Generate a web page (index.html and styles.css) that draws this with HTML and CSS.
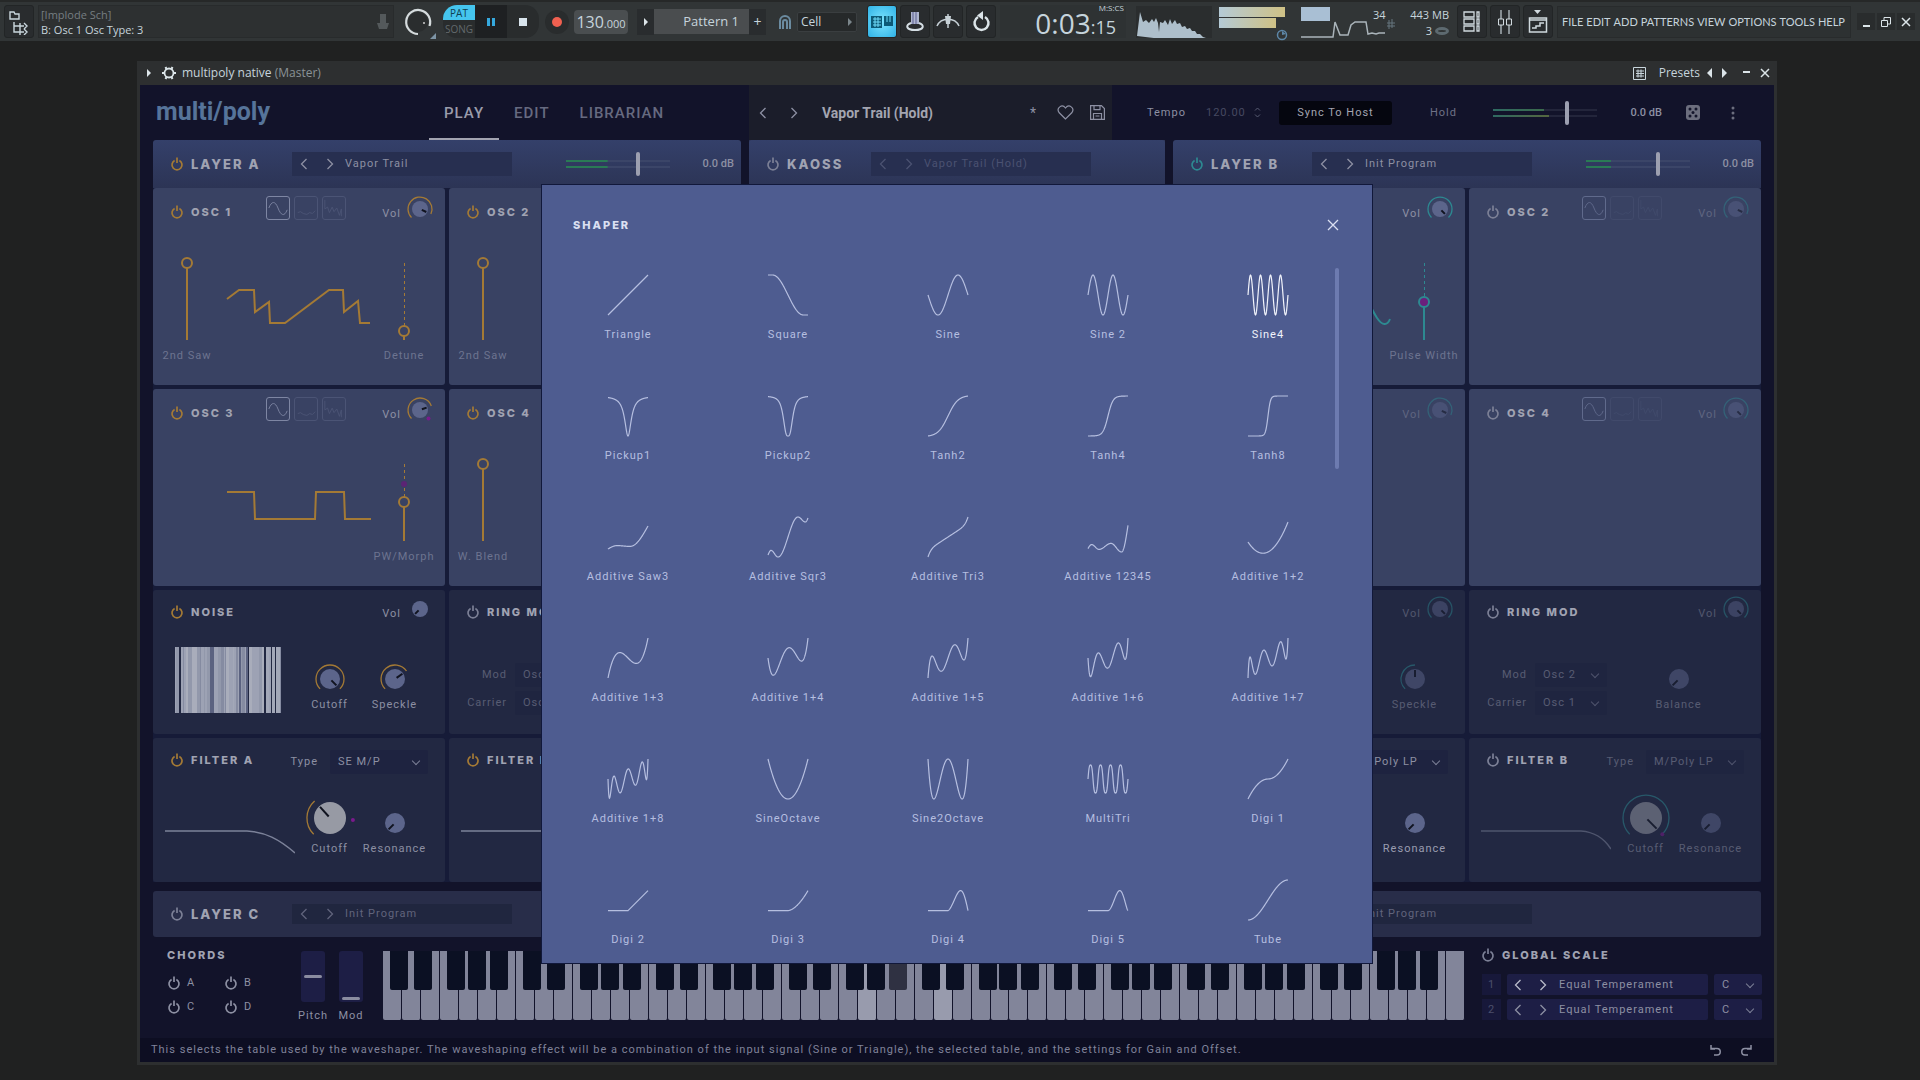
FILE: index.html
```html
<!DOCTYPE html>
<html lang="en">
<head>
    <meta charset="UTF-8">
    <meta name="viewport" content="width=device-width, initial-scale=1.0">
    <title>multipoly native (Master)</title>
    <link rel="stylesheet" href="styles.css">
</head>
<body>
    <svg class="sprite" aria-hidden="true">
        <symbol id="power" viewBox="0 0 14 14">
            <path d="M4.6 3.4a5 5 0 1 0 4.8 0M7 .5v5.5" fill="none" stroke="currentColor" stroke-width="1.7"/>
        </symbol>
        <symbol id="prev" viewBox="0 0 8 12"><path d="M6.5 1L1.5 6l5 5" fill="none" stroke="currentColor" stroke-width="1.3"/></symbol>
        <symbol id="next" viewBox="0 0 8 12"><path d="M1.5 1l5 5-5 5" fill="none" stroke="currentColor" stroke-width="1.3"/></symbol>
        <symbol id="mode-va" viewBox="0 0 24 24"><path d="M2 12C5 4 9 4 12 12s7 10 10 2" fill="none" stroke="currentColor"/></symbol>
        <symbol id="mode-wave" viewBox="0 0 24 24"><path d="M3 17l3-1 3 2 4 1 3-2 3 1 3-3" fill="none" stroke="currentColor"/></symbol>
        <symbol id="mode-digi" viewBox="0 0 24 24"><path d="M2 3v10l3-2 2 6 3-6 2 5 3-4 3 8 2-7v8" fill="none" stroke="currentColor"/></symbol>
    </svg>

    <!-- Host toolbar -->
    <header class="toolbar">
        <button class="tool tool-browser" aria-label="Browser">
            <svg width="22" height="26" viewBox="0 0 22 26"><path d="M2 3h4l1 2h4v5H2zM6 13v10h10M6 17h10M12 14v6M16 14l3 3-3 3M12 20v6M16 20l3 3-3 3" fill="none" stroke="#c9d6dd" stroke-width="1.4"/></svg>
        </button>
        <div class="hint">
            <div class="hint-text">
                <span class="hint-dim">[Implode Sch]</span>
                <span>B: Osc 1 Osc Type: 3</span>
            </div>
            <svg width="14" height="18" viewBox="0 0 14 18"><path d="M4 1h6v9h3l-2 6H3l-2-6h3z" fill="#54595b"/></svg>
        </div>
        <svg class="master" width="34" height="34" viewBox="0 0 34 34">
            <circle cx="16" cy="17" r="10" fill="#2a2d2e"/>
            <path d="M16 29a12 12 0 1 1 11.5-8" fill="none" stroke="#d5dbdd" stroke-width="2.2"/>
            <circle cx="22" cy="18" r="1" fill="#ccc"/><path d="M34 28v6h-6z" fill="#7d94a5"/>
        </svg>
        <div class="transport">
            <div class="pat-song">
                <button class="pat">PAT</button>
                <button class="song">SONG</button>
            </div>
            <button class="play-btn" aria-label="Pause"><svg width="8" height="8"><path d="M0 0h3v8H0zM5 0h3v8H5z" fill="#35a8dd"/></svg></button>
            <button class="stop-btn" aria-label="Stop"><svg width="8" height="8"><path d="M0 0h8v8H0z" fill="#d8e4ec"/></svg></button>
        </div>
        <button class="record" aria-label="Record"><svg width="26" height="26"><circle cx="13" cy="13" r="12" fill="#292c2d"/><circle cx="13" cy="13" r="5" fill="#f06050"/></svg></button>
        <div class="bpm">130<small>.000</small></div>
        <div class="pattern">
            <button class="tool-sm" aria-label="Pattern menu"><svg width="4" height="8"><path d="M0 0l4 4-4 4z" fill="#dde6ea"/></svg></button>
            <span class="pattern-name">Pattern 1</span>
            <button class="tool-sm" aria-label="Add pattern">+</button>
        </div>
        <div class="snap">
            <svg width="14" height="16" viewBox="0 0 14 16"><path d="M2 15V7a5 5 0 0 1 10 0v8M5 15V8a2 2 0 0 1 4 0v7" fill="none" stroke="#6b8ba0" stroke-width="2"/></svg>
            <button class="snap-box">Cell<svg width="4" height="8"><path d="M0 0l4 4-4 4z" fill="#7b868b"/></svg></button>
        </div>
        <div class="tool-group">
            <button class="tool tool-on" aria-label="Typing keyboard">
                <svg width="22" height="14" viewBox="0 0 22 14"><path d="M0 1h11v12H0zM13 1h9v10h-9z" fill="#0c5a77"/><path d="M2 4h8M2 7h8M2 10h8M4 2v10M7 2v10M16 1v6M19 1v6" stroke="#6fdcfb"/></svg>
            </button>
            <button class="tool" aria-label="Count in">
                <svg width="20" height="22" viewBox="0 0 20 22"><path d="M6 1h8v12H6z" fill="#aeb6cf"/><path d="M8 1v12M11 1v12" stroke="#5d5f90"/><path d="M6 12c-6 2-5 7 4 7s10-5 4-7" fill="none" stroke="#d5dee4" stroke-width="2"/></svg>
            </button>
            <button class="tool" aria-label="Step edit">
                <svg width="24" height="20" viewBox="0 0 24 20"><path d="M1 14C5 5 19 5 23 14M12 2v14" fill="none" stroke="#c6d0d6" stroke-width="1.5"/><path d="M9 4h6l-1 8h-4z" fill="#c6d0d6"/></svg>
            </button>
            <button class="tool" aria-label="Loop record">
                <svg width="20" height="22" viewBox="0 0 20 22"><path d="M14 6a7 7 0 1 1-7 0" fill="none" stroke="#dbe4e8" stroke-width="2.5"/><path d="M12 0v9L6 4.5z" fill="#dbe4e8"/></svg>
            </button>
        </div>
        <div class="clock">
            <span>0:03<small>:15</small></span>
            <sup>M:S:CS</sup>
        </div>
        <svg class="spectrum" width="76" height="32" viewBox="0 0 76 32"><path d="M1 30L4 6l3 10 3-2 3 3 3-4 2 3 2-4 2 5 1 9 1-10 3 1 2-3 3 5 2-6 2 5 3-4 2 4 3-1 2 4 3-1 2 3 3-1 2 3 3 0 2 3 3 0 3 3 3 1 2 2 2 1 2 3v1z" fill="#aebfcb"/></svg>
        <div class="levels">
            <i></i><i class="short"></i>
            <svg width="12" height="12" viewBox="0 0 12 12"><circle cx="6" cy="6" r="4.5" fill="none" stroke="#5d87a8" stroke-width="1.5"/><path d="M6 6V2l4 3z" fill="#5d87a8"/></svg>
        </div>
        <div class="perf">
            <svg width="96" height="36" viewBox="0 0 96 36"><path d="M0 3h29v14H0z" fill="#a9bfd4"/><path d="M0 33h32l2-15 5 13h8l3-10 4-3h11l2 12 4-1 4 1 3-1h6" fill="none" stroke="#aab4ba" stroke-width="1.5"/><path d="M88 16v9M91 15v9M86 19h8M86 22h8" stroke="#66767f"/></svg>
            <span class="perf-cpu">34</span>
            <div class="perf-mem"><span>443 MB</span><span>3 <i></i></span></div>
        </div>
        <div class="tool-group">
            <button class="tool" aria-label="Playlist"><svg width="18" height="22" viewBox="0 0 18 22"><path d="M1 1h10v5H1zM1 8h10v5H1zM1 15h10v5H1zM14 1h2v5h-2zM14 8h2v5h-2zM14 15h2v5h-2z" fill="none" stroke="#d0d9de" stroke-width="1.3"/></svg></button>
            <button class="tool" aria-label="Mixer"><svg width="16" height="24" viewBox="0 0 16 24"><path d="M4 0v24M12 0v24" stroke="#b8c2c8" stroke-width="1.3"/><path d="M1.5 9h5v6h-5zM9.5 9h5v6h-5z" fill="#2c2f31" stroke="#d0d9de"/></svg></button>
            <button class="tool" aria-label="Channel rack"><svg width="20" height="24" viewBox="0 0 20 24"><path d="M6 0h7l-3.5 4z" fill="#d0d9de"/><path d="M1.5 8h17v14h-17zM1.5 10h17M4 18h4v-2h4v-3h4" fill="none" stroke="#d0d9de" stroke-width="1.5"/></svg></button>
        </div>
        <nav class="menu">
            <button>FILE</button><button>EDIT</button><button>ADD</button><button>PATTERNS</button><button>VIEW</button><button>OPTIONS</button><button>TOOLS</button><button>HELP</button>
        </nav>
        <div class="win-btns">
            <button aria-label="Minimize"><svg width="10" height="10"><path d="M2 9h7" stroke="#dbe4e8" stroke-width="2"/></svg></button>
            <button aria-label="Restore"><svg width="10" height="10"><path d="M.5 3.5h6v6h-6zM3 3V.5h6.5V7H7" fill="none" stroke="#dbe4e8"/></svg></button>
            <button aria-label="Close"><svg width="10" height="10"><path d="M1 1l8 8M9 1L1 9" stroke="#dbe4e8" stroke-width="1.5"/></svg></button>
        </div>
    </header>

    <!-- Plugin window -->
    <main class="window">
        <div class="titlebar">
            <svg width="4" height="8"><path d="M0 0l4 4-4 4z" fill="#dde6ea"/></svg>
            <svg class="gear" width="14" height="14" viewBox="0 0 14 14"><circle cx="7" cy="7" r="4.5" fill="none" stroke="#dde6ea" stroke-width="1.8"/><path d="M3.5 1l1 2M10.5 1l-1 2M3.5 13l1-2M10.5 13l-1-2M0 7h2M12 7h2" stroke="#dde6ea" stroke-width="2"/></svg>
            <span>multipoly native <em>(Master)</em></span>
            <div class="titlebar-right">
                <svg width="13" height="13"><path d="M.5.5h12v12H.5z" fill="none" stroke="#c9d6dd"/><path d="M3 4h8M3 6.5h8M3 9h8M5 2.5v8M8 2.5v8" stroke="#c9d6dd"/></svg>
                <button class="presets">Presets</button>
                <button aria-label="Previous preset"><svg width="5" height="10"><path d="M5 0L0 5l5 5z" fill="#dbe4e8"/></svg></button>
                <button aria-label="Next preset"><svg width="5" height="10"><path d="M0 0l5 5-5 5z" fill="#dbe4e8"/></svg></button>
                <button class="tb-min" aria-label="Minimize"><svg width="8" height="10"><path d="M0 4h7" stroke="#dbe4e8" stroke-width="2"/></svg></button>
                <button class="tb-close" aria-label="Close"><svg width="10" height="10"><path d="M1 1l8 8M9 1L1 9" stroke="#dbe4e8" stroke-width="1.5"/></svg></button>
            </div>
        </div>

        <div class="plugin">
            <div class="topbar">
                <div class="topbar-left">
                    <div class="logo">multi/poly</div>
                    <nav class="tabs">
                        <button class="tab active">PLAY</button>
                        <button class="tab">EDIT</button>
                        <button class="tab">LIBRARIAN</button>
                    </nav>
                </div>
                <div class="program">
                    <button aria-label="Previous"><svg width="8" height="12"><use href="#prev"/></svg></button>
                    <button aria-label="Next"><svg width="8" height="12"><use href="#next"/></svg></button>
                    <span class="program-name">Vapor Trail (Hold)</span>
                    <span class="program-star">*</span>
                    <button aria-label="Favorite"><svg width="17" height="15" viewBox="0 0 17 15"><path d="M8.5 14L2 7.5C-1 3 5-1.5 8.5 3 12-1.5 18 3 15 7.5z" fill="none" stroke="currentColor" stroke-width="1.2"/></svg></button>
                    <button aria-label="Save"><svg width="15" height="15" viewBox="0 0 15 15"><path d="M.6.6h10.8l3 3v10.8H.6zM4 .6v4h6v-4M3.5 14V8.5h8V14M5.5 11h4" fill="none" stroke="currentColor" stroke-width="1.2"/></svg></button>
                </div>
                <div class="topbar-right">
                    <label for="tempo">Tempo</label>
                    <input id="tempo" class="tempo" type="text" value="120.00">
                    <svg class="updown" width="7" height="11"><path d="M1 3.5L3.5 1 6 3.5M1 7.5L3.5 10 6 7.5" fill="none" stroke="currentColor"/></svg>
                    <button class="sync">Sync To Host</button>
                    <span class="hold">Hold</span>
                    <input class="meter meter-main" type="range" value="72" aria-label="Master volume">
                    <output>0.0 dB</output>
                    <button class="dice" aria-label="Randomize"><svg width="14" height="15" viewBox="0 0 14 15"><rect width="14" height="15" rx="3" fill="#6c6e7e"/><g fill="#14152b"><circle cx="4" cy="4" r="1.5"/><circle cx="10" cy="4" r="1.5"/><circle cx="7" cy="7.5" r="1.5"/><circle cx="4" cy="11" r="1.5"/><circle cx="10" cy="11" r="1.5"/></g></svg></button>
                    <button aria-label="More"><svg width="4" height="14"><g fill="#6c6e7e"><circle cx="2" cy="2" r="1.5"/><circle cx="2" cy="7" r="1.5"/><circle cx="2" cy="12" r="1.5"/></g></svg></button>
                </div>
            </div>

            <div class="layers">
                <section class="layer layer-a">
                    <div class="layer-head">
                        <button class="power on" aria-label="Layer A power"><svg><use href="#power"/></svg></button>
                        <h2>LAYER A</h2>
                        <div class="preset">
                            <button aria-label="Previous"><svg width="8" height="12"><use href="#prev"/></svg></button>
                            <button aria-label="Next"><svg width="8" height="12"><use href="#next"/></svg></button>
                            <span>Vapor Trail</span>
                        </div>
                        <input class="meter meter-a" type="range" value="70" aria-label="Layer A volume">
                        <output>0.0 dB</output>
                    </div>
                    <div class="panels">
                        <article class="panel osc">
                            <div class="panel-head">
                                <button class="power on" aria-label="Osc 1 power"><svg><use href="#power"/></svg></button>
                                <h3>OSC 1</h3>
                                <div class="modes">
                                    <button class="active" aria-label="Analog"><svg><use href="#mode-va"/></svg></button><button aria-label="Wave"><svg><use href="#mode-wave"/></svg></button><button aria-label="Digital"><svg><use href="#mode-digi"/></svg></button>
                                </div>
                                <div class="vol"><span>Vol</span><i class="knob" data-angle="115"></i></div>
                            </div>
                            <div class="osc-body">
                                <div class="fader-col">
                                    <input class="fader" id="a1-saw" type="range" value="100" style="--fill:100%">
                                    <label for="a1-saw">2nd Saw</label>
                                </div>
                                <svg class="wave" viewBox="0 0 143 36"><path d="M0 10L12 1h15l1 22 14-10 1 21h15L102 1h14l1 22 14-11 2 22h10"/></svg>
                                <div class="fader-col right">
                                    <input class="fader" id="a1-det" type="range" value="12" style="--fill:13%">
                                    <label for="a1-det">Detune</label>
                                </div>
                            </div>
                        </article>
                        <article class="panel osc">
                            <div class="panel-head">
                                <button class="power on" aria-label="Osc 2 power"><svg><use href="#power"/></svg></button>
                                <h3>OSC 2</h3>
                            </div>
                            <div class="osc-body">
                                <div class="fader-col">
                                    <input class="fader" id="a2-saw" type="range" value="100" style="--fill:100%">
                                    <label for="a2-saw">2nd Saw</label>
                                </div>
                                <svg class="wave" viewBox="0 0 143 36"><path d="M0 1h6l1 22h20l20-22h20v33h40V1h36"/></svg>
                            </div>
                        </article>
                        <article class="panel osc">
                            <div class="panel-head">
                                <button class="power on" aria-label="Osc 3 power"><svg><use href="#power"/></svg></button>
                                <h3>OSC 3</h3>
                                <div class="modes">
                                    <button class="active" aria-label="Analog"><svg><use href="#mode-va"/></svg></button><button aria-label="Wave"><svg><use href="#mode-wave"/></svg></button><button aria-label="Digital"><svg><use href="#mode-digi"/></svg></button>
                                </div>
                                <div class="vol"><span>Vol</span><i class="knob" data-angle="70" data-mod="135"></i></div>
                            </div>
                            <div class="osc-body">
                                <div class="fader-col"></div>
                                <svg class="wave" viewBox="0 0 143 36"><path d="M0 2h27l1 27h60l1-27h28l1 27h26"/></svg>
                                <div class="fader-col right">
                                    <input class="fader modded" id="a3-pw" type="range" value="51" style="--fill:51%">
                                    <label for="a3-pw">PW/Morph</label>
                                </div>
                            </div>
                        </article>
                        <article class="panel osc">
                            <div class="panel-head">
                                <button class="power on" aria-label="Osc 4 power"><svg><use href="#power"/></svg></button>
                                <h3>OSC 4</h3>
                            </div>
                            <div class="osc-body">
                                <div class="fader-col">
                                    <input class="fader" id="a4-blend" type="range" value="100" style="--fill:100%">
                                    <label for="a4-blend">W. Blend</label>
                                </div>
                                <svg class="wave" viewBox="0 0 143 36"><path d="M0 28h60V2h40v26h43"/></svg>
                            </div>
                        </article>
                        <article class="panel low">
                            <div class="panel-head">
                                <button class="power on" aria-label="Noise power"><svg><use href="#power"/></svg></button>
                                <h3>NOISE</h3>
                                <div class="vol"><span>Vol</span><i class="knob" data-angle="-135"></i></div>
                            </div>
                            <div class="low-body">
                                <svg class="noise" id="noise" viewBox="0 0 110 66"></svg>
                                <div class="knobs">
                                    <div class="knob-col"><i class="knob mid" data-angle="135"></i><span>Cutoff</span></div>
                                    <div class="knob-col"><i class="knob mid" data-angle="55"></i><span>Speckle</span></div>
                                </div>
                            </div>
                        </article>
                        <article class="panel low">
                            <div class="panel-head">
                                <button class="power" aria-label="Ring mod power"><svg><use href="#power"/></svg></button>
                                <h3>RING MOD</h3>
                            </div>
                            <div class="low-body faint">
                                <div class="ring-form">
                                    <label for="a-mod">Mod</label><div class="select"><select id="a-mod"><option>Osc 2</option></select></div>
                                    <label for="a-car">Carrier</label><div class="select"><select id="a-car"><option>Osc 1</option></select></div>
                                </div>
                            </div>
                        </article>
                        <article class="panel low filter">
                            <div class="panel-head">
                                <button class="power on" aria-label="Filter A power"><svg><use href="#power"/></svg></button>
                                <h3>FILTER A</h3>
                                <div class="type"><label for="a-ft">Type</label><div class="select"><select id="a-ft"><option>SE M/P</option></select></div></div>
                            </div>
                            <div class="low-body">
                                <svg class="curve" viewBox="0 0 130 26"><path d="M0 2h82c18 1 32 8 48 22"/></svg>
                                <div class="knobs">
                                    <div class="knob-col"><i class="knob big" data-angle="-42" data-mod="95"></i><span>Cutoff</span></div>
                                    <div class="knob-col"><i class="knob mid" data-angle="-135"></i><span>Resonance</span></div>
                                </div>
                            </div>
                        </article>
                        <article class="panel low filter">
                            <div class="panel-head">
                                <button class="power on" aria-label="Filter B power"><svg><use href="#power"/></svg></button>
                                <h3>FILTER B</h3>
                            </div>
                            <div class="low-body">
                                <svg class="curve" viewBox="0 0 130 26"><path d="M0 2h82c18 1 32 8 48 22"/></svg>
                            </div>
                        </article>
                    </div>
                    <div class="layer-head flat">
                        <button class="power" aria-label="Layer C power"><svg><use href="#power"/></svg></button>
                        <h2>LAYER C</h2>
                        <div class="preset dim">
                            <button aria-label="Previous"><svg width="8" height="12"><use href="#prev"/></svg></button>
                            <button aria-label="Next"><svg width="8" height="12"><use href="#next"/></svg></button>
                            <span>Init Program</span>
                        </div>
                    </div>
                </section>

                <section class="layer kaoss">
                    <div class="layer-head">
                        <button class="power" aria-label="Kaoss power"><svg><use href="#power"/></svg></button>
                        <h2>KAOSS</h2>
                        <div class="preset faint">
                            <button aria-label="Previous"><svg width="8" height="12"><use href="#prev"/></svg></button>
                            <button aria-label="Next"><svg width="8" height="12"><use href="#next"/></svg></button>
                            <span>Vapor Trail (Hold)</span>
                        </div>
                    </div>
                </section>

                <section class="layer layer-b">
                    <div class="layer-head">
                        <button class="power on" aria-label="Layer B power"><svg><use href="#power"/></svg></button>
                        <h2>LAYER B</h2>
                        <div class="preset">
                            <button aria-label="Previous"><svg width="8" height="12"><use href="#prev"/></svg></button>
                            <button aria-label="Next"><svg width="8" height="12"><use href="#next"/></svg></button>
                            <span>Init Program</span>
                        </div>
                        <input class="meter meter-b" type="range" value="70" aria-label="Layer B volume">
                        <output>0.0 dB</output>
                    </div>
                    <div class="panels">
                        <article class="panel osc">
                            <div class="panel-head">
                                <div class="vol"><span>Vol</span><i class="knob" data-angle="135"></i></div>
                            </div>
                            <div class="osc-body">
                                <div class="fader-col"></div>
                                <svg class="wave" viewBox="0 0 143 36"><path d="M0 20c20-40 40 30 60 10s35-50 60-20c6 12 12 26 18 25q3 0 5-5"/></svg>
                                <div class="fader-col right">
                                    <input class="fader dotted" id="b1-pw" type="range" value="50" style="--fill:50%">
                                    <label for="b1-pw">Pulse Width</label>
                                </div>
                            </div>
                        </article>
                        <article class="panel osc off">
                            <div class="panel-head">
                                <button class="power" aria-label="Osc 2 power"><svg><use href="#power"/></svg></button>
                                <h3>OSC 2</h3>
                                <div class="modes">
                                    <button class="active" aria-label="Analog"><svg><use href="#mode-va"/></svg></button><button aria-label="Wave"><svg><use href="#mode-wave"/></svg></button><button aria-label="Digital"><svg><use href="#mode-digi"/></svg></button>
                                </div>
                                <div class="vol"><span>Vol</span><i class="knob" data-angle="115"></i></div>
                            </div>
                        </article>
                        <article class="panel osc off">
                            <div class="panel-head">
                                <div class="vol"><span>Vol</span><i class="knob" data-angle="115"></i></div>
                            </div>
                        </article>
                        <article class="panel osc off">
                            <div class="panel-head">
                                <button class="power" aria-label="Osc 4 power"><svg><use href="#power"/></svg></button>
                                <h3>OSC 4</h3>
                                <div class="modes">
                                    <button class="active" aria-label="Analog"><svg><use href="#mode-va"/></svg></button><button aria-label="Wave"><svg><use href="#mode-wave"/></svg></button><button aria-label="Digital"><svg><use href="#mode-digi"/></svg></button>
                                </div>
                                <div class="vol"><span>Vol</span><i class="knob" data-angle="135"></i></div>
                            </div>
                        </article>
                        <article class="panel low off">
                            <div class="panel-head">
                                <div class="vol"><span>Vol</span><i class="knob" data-angle="135"></i></div>
                            </div>
                            <div class="low-body faint">
                                <div class="knobs">
                                    <div class="knob-col"><i class="knob mid" data-angle="0"></i><span>Speckle</span></div>
                                </div>
                            </div>
                        </article>
                        <article class="panel low off">
                            <div class="panel-head">
                                <button class="power" aria-label="Ring mod power"><svg><use href="#power"/></svg></button>
                                <h3>RING MOD</h3>
                                <div class="vol"><span>Vol</span><i class="knob" data-angle="135"></i></div>
                            </div>
                            <div class="low-body faint">
                                <div class="ring-form">
                                    <label for="b-mod">Mod</label><div class="select"><select id="b-mod"><option>Osc 2</option></select></div>
                                    <label for="b-car">Carrier</label><div class="select"><select id="b-car"><option>Osc 1</option></select></div>
                                </div>
                                <div class="knobs balance">
                                    <div class="knob-col"><i class="knob mid" data-angle="-135"></i><span>Balance</span></div>
                                </div>
                            </div>
                        </article>
                        <article class="panel low filter">
                            <div class="panel-head">
                                <div class="type"><label for="b-fa">Type</label><div class="select"><select id="b-fa"><option>M/Poly LP</option></select></div></div>
                            </div>
                            <div class="low-body">
                                <div class="knobs">
                                    <div class="knob-col bright"><i class="knob mid" data-angle="-135"></i><span>Resonance</span></div>
                                </div>
                            </div>
                        </article>
                        <article class="panel low filter">
                            <div class="panel-head">
                                <button class="power" aria-label="Filter B power"><svg><use href="#power"/></svg></button>
                                <h3>FILTER B</h3>
                                <div class="type faint"><label for="b-fb">Type</label><div class="select"><select id="b-fb"><option>M/Poly LP</option></select></div></div>
                            </div>
                            <div class="low-body faint">
                                <svg class="curve" viewBox="0 0 130 26"><path d="M0 2h100c13 1 22 6 30 18"/></svg>
                                <div class="knobs">
                                    <div class="knob-col"><i class="knob big" data-angle="135" data-mod="135"></i><span>Cutoff</span></div>
                                    <div class="knob-col"><i class="knob mid" data-angle="-135"></i><span>Resonance</span></div>
                                </div>
                            </div>
                        </article>
                    </div>
                    <div class="layer-head flat">
                        <button class="power" aria-label="Layer D power"><svg><use href="#power"/></svg></button>
                        <h2>LAYER D</h2>
                        <div class="preset dim">
                            <button aria-label="Previous"><svg width="8" height="12"><use href="#prev"/></svg></button>
                            <button aria-label="Next"><svg width="8" height="12"><use href="#next"/></svg></button>
                            <span>Init Program</span>
                        </div>
                    </div>
                </section>
            </div>

            <div class="keys-row">
                <div class="chords">
                    <h3>CHORDS</h3>
                    <div class="chord-grid">
                        <button class="chord"><svg><use href="#power"/></svg>A</button>
                        <button class="chord"><svg><use href="#power"/></svg>B</button>
                        <button class="chord"><svg><use href="#power"/></svg>C</button>
                        <button class="chord"><svg><use href="#power"/></svg>D</button>
                    </div>
                </div>
                <div class="wheels">
                    <div class="wheel-col"><input id="pitch" class="wheel" type="range" value="50"><label for="pitch">Pitch</label></div>
                    <div class="wheel-col"><input id="mod" class="wheel" type="range" value="5"><label for="mod">Mod</label></div>
                </div>
                <div class="keyboard" id="keyboard"></div>
                <div class="scale">
                    <div class="scale-head">
                        <button class="power" aria-label="Global scale power"><svg><use href="#power"/></svg></button>
                        <h3>GLOBAL SCALE</h3>
                    </div>
                    <div class="scale-row">
                        <span class="scale-num">1</span>
                        <div class="scale-preset bright">
                            <button aria-label="Previous"><svg width="8" height="12"><use href="#prev"/></svg></button>
                            <button aria-label="Next"><svg width="8" height="12"><use href="#next"/></svg></button>
                            <span>Equal Temperament</span>
                        </div>
                        <div class="select"><select aria-label="Scale 1 key"><option>C</option></select></div>
                    </div>
                    <div class="scale-row">
                        <span class="scale-num">2</span>
                        <div class="scale-preset">
                            <button aria-label="Previous"><svg width="8" height="12"><use href="#prev"/></svg></button>
                            <button aria-label="Next"><svg width="8" height="12"><use href="#next"/></svg></button>
                            <span>Equal Temperament</span>
                        </div>
                        <div class="select"><select aria-label="Scale 2 key"><option>C</option></select></div>
                    </div>
                </div>
            </div>

            <footer class="status">
                <p>This selects the table used by the waveshaper. The waveshaping effect will be a combination of the input signal (Sine or Triangle), the selected table, and the settings for Gain and Offset.</p>
                <button aria-label="Undo"><svg width="12" height="12" viewBox="0 0 12 12"><path d="M1 1v4h4M1.5 4.5H7a3.2 3.2 0 0 1 0 6.500H4" fill="none" stroke="currentColor" stroke-width="1.5"/></svg></button>
                <button aria-label="Redo"><svg width="12" height="12" viewBox="0 0 12 12"><path d="M11 1v4H7M10.5 4.5H5a3.2 3.2 0 0 0 0 6.500h3" fill="none" stroke="currentColor" stroke-width="1.5"/></svg></button>
            </footer>

            <!-- Shaper browser, floats over the plugin -->
            <div class="shaper" role="dialog" aria-labelledby="shaper-title">
                <div class="shaper-head">
                    <h2 id="shaper-title">SHAPER</h2>
                    <button aria-label="Close"><svg width="12" height="12"><path d="M1 1l10 10M11 1L1 11" stroke="currentColor" stroke-width="1.3"/></svg></button>
                </div>
                <div class="shaper-body">
                    <div class="shaper-grid" id="shapes"></div>
                    <div class="scrollbar"></div>
                </div>
            </div>
        </div>
    </main>
    <script src="script.js"></script>
</body>
</html>
```
FILE: styles.css
```css
* {
    box-sizing: border-box;
}

body {
    margin: 0;
    min-height: 100vh;
    background: #202121;
    color: #8d90a3;
    font-family: Roboto, sans-serif;
    font-size: 11px;
    letter-spacing: 1px;
    line-height: 16px;
    overflow: hidden;
}

button,
input,
select {
    font: inherit;
    letter-spacing: inherit;
    color: inherit;
    background: none;
    border: 0;
    padding: 0;
    margin: 0;
}

button {
    display: flex;
    align-items: center;
    justify-content: center;
    cursor: pointer;
}

svg {
    display: block;
    flex: none;
}

h2,
h3,
p {
    margin: 0;
}

.sprite {
    position: absolute;
    width: 0;
    height: 0;
}

/* ---------- host toolbar ---------- */

.toolbar {
    display: flex;
    align-items: center;
    height: 41px;
    padding: 0 5px 0 4px;
    background: #313536;
    border-top: 2px solid #262828;
    color: #c6d4dc;
    font-family: "Open Sans", sans-serif;
    font-size: 12px;
    letter-spacing: 0;
}

.tool {
    width: 30px;
    height: 33px;
    background: #292c2e;
    border: 1px solid #222526;
    border-radius: 3px;
}

.tool-on {
    background: radial-gradient(#7de4ff, #2fb2e6);
}

.tool-group {
    display: flex;
    gap: 3px;
}

.hint {
    display: flex;
    flex: 1;
    align-items: center;
    justify-content: space-between;
    height: 33px;
    margin: 0 4px;
    padding: 0 3px 0 2px;
    background: #2d3031;
    border: 1px solid #282b2c;
}

.hint-text {
    display: flex;
    flex-direction: column;
    font-size: 11px;
    line-height: 15px;
}

.hint-dim {
    color: #767e82;
}

.master {
    margin: 0 7px 0 4px;
}

.transport {
    display: flex;
    height: 33px;
    border-radius: 14px;
    background: #292c2d;
    overflow: hidden;
}

.pat-song {
    display: flex;
    flex-direction: column;
    width: 32px;
    font-size: 10px;
}

.pat {
    height: 15px;
    background: #45c5ee;
    color: #10404f;
}

.song {
    flex: 1;
    color: #62696c;
}

.play-btn {
    width: 32px;
    background: #1e2022;
}

.stop-btn {
    width: 32px;
}

.record {
    margin: 0 4px 0 5px;
}

.bpm {
    width: 54px;
    height: 24px;
    border-radius: 4px;
    background: #4a4e50;
    font-size: 16px;
    line-height: 24px;
    text-align: center;
}

.bpm small {
    font-size: 11px;
}

.pattern {
    display: flex;
    align-items: center;
    margin: 0 12px 0 9px;
}

.tool-sm {
    width: 17px;
    height: 26px;
    background: #292c2e;
    font-size: 14px;
}

.pattern-name {
    width: 95px;
    height: 25px;
    padding-right: 10px;
    background: #4a4d4f;
    font-size: 13px;
    line-height: 24px;
    text-align: right;
}

.snap {
    display: flex;
    align-items: center;
    gap: 5px;
    margin-right: 10px;
}

.snap-box {
    justify-content: space-between;
    width: 60px;
    height: 20px;
    padding: 0 4px 0 3px;
    background: #26292a;
    border: 1px solid #3a3e40;
    border-radius: 2px;
}

.clock {
    display: flex;
    align-items: flex-end;
    justify-content: flex-end;
    position: relative;
    width: 126px;
    height: 33px;
    margin: 0 10px 0 4px;
    padding: 0 10px 1px 0;
    background: #2e3233;
    font-size: 28px;
    line-height: 28px;
}

.clock small {
    font-size: 18px;
    line-height: 18px;
}

.clock sup {
    position: absolute;
    top: -2px;
    right: 2px;
    font-size: 8px;
    line-height: 9px;
}

.spectrum {
    background: #2a2d2e;
}

.levels {
    width: 81px;
    height: 34px;
    padding: 2px 5px 0 7px;
}

.levels i {
    display: block;
    width: 66px;
    height: 10px;
    margin-bottom: 1px;
    background: linear-gradient(90deg, #b4cad6, #cfc185);
}

.levels .short {
    width: 57px;
}

.levels svg {
    float: right;
}

.perf {
    display: flex;
    width: 148px;
    margin: 0 8px;
    font-size: 11px;
}

.perf-cpu {
    margin: 3px 0 0 -24px;
}

.perf-mem {
    display: flex;
    flex: 1;
    flex-direction: column;
    align-items: flex-end;
    padding-top: 3px;
}

.perf-mem i {
    display: inline-block;
    width: 14px;
    height: 8px;
    border: 3px solid #5d6a70;
    border-radius: 50%;
}

.menu {
    display: flex;
    align-items: center;
    justify-content: space-between;
    width: 294px;
    height: 32px;
    margin: 0 6px 0 4px;
    padding: 0 5px 0 4px;
    background: #2d3132;
    border: 1px solid #282b2c;
    font-family: Lato, sans-serif;
    font-size: 11px;
}

.win-btns {
    display: flex;
    gap: 2px;
}

.win-btns button {
    width: 18px;
    height: 17px;
    background: #292c2d;
}

/* ---------- plugin window ---------- */

.window {
    margin: 20px 143px 0 137px;
    padding: 0 3px 3px;
    background: #2d2f30;
}

.titlebar {
    display: flex;
    align-items: center;
    height: 24px;
    padding: 0 4px 0 7px;
    color: #c6d4dc;
    font-family: "Open Sans", sans-serif;
    font-size: 12px;
    letter-spacing: 0;
}

.gear {
    margin: 0 6px 0 11px;
}

.titlebar em {
    color: #8a9296;
    font-style: normal;
}

.titlebar-right {
    display: flex;
    align-items: center;
    margin-left: auto;
}

.presets {
    margin: 0 7px 0 13px;
}

.presets + button {
    margin-right: 10px;
}

.tb-min {
    margin: 0 9px 0 16px;
}

.plugin {
    position: relative;
    background: #12132a;
}

.topbar {
    display: grid;
    grid-template-columns: minmax(0, 609fr) minmax(0, 363fr) minmax(0, 662fr);
    height: 55px;
}

.topbar-left {
    display: flex;
    padding-left: 16px;
}

.logo {
    width: 273px;
    color: #56749a;
    font-size: 25px;
    font-weight: 700;
    letter-spacing: 0;
    line-height: 54px;
}

.tabs {
    display: flex;
}

.tab {
    padding: 2px 15px 0;
    border-bottom: 2px solid transparent;
    color: #666a80;
    font-size: 15px;
    font-weight: 500;
}

.tab.active {
    border-color: #a2a3b0;
    color: #9a9cab;
}

.program {
    display: flex;
    align-items: center;
    padding: 0 7px 0 10px;
    background: #1b1d2a;
}

.program button + button {
    margin-left: 23px;
}

.program-name {
    flex: 1;
    margin-left: 24px;
    color: #a3a5b1;
    font-size: 14px;
    font-weight: 700;
    letter-spacing: 0;
}

.program-star {
    margin-right: 20px;
    font-size: 14px;
}

.program .program-star ~ button + button {
    margin-left: 16px;
}

.topbar-right {
    display: flex;
    align-items: center;
    padding: 0 39px 0 35px;
}

.tempo {
    width: 44px;
    margin-left: 20px;
    color: #464961;
}

.updown {
    margin: 0 18px 0 4px;
    color: #595c73;
}

.sync {
    width: 113px;
    height: 24px;
    border-radius: 3px;
    background: #05060f;
    color: #a3a5b1;
    font-size: 11px;
}

.hold {
    margin: 0 auto 0 38px;
    color: #6f7287;
}

output {
    flex: none;
    font-weight: 500;
    letter-spacing: 0;
}

.topbar-right output {
    margin: 0 24px 0 34px;
}

.dice {
    margin-right: 31px;
}

/* horizontal volume fader with a stereo meter behind it */
.meter {
    appearance: none;
    width: 104px;
    height: 24px;
    background:
        linear-gradient(#2a7a55, #2a7a55) 0 8px / 40% 2px no-repeat,
        linear-gradient(#2a7a55, #2a7a55) 0 14px / 40% 2px no-repeat,
        linear-gradient(#3b4568, #3b4568) 0 8px / 100% 2px no-repeat,
        linear-gradient(#3b4568, #3b4568) 0 14px / 100% 2px no-repeat;
}

.meter-b {
    background-size: 24% 2px, 24% 2px, 100% 2px, 100% 2px;
}

.meter-main {
    background:
        linear-gradient(90deg, #2f6a62, #3b6a4c) 0 8px / 51px 2px no-repeat,
        linear-gradient(90deg, #2f6a62, #55663f) 0 14px / 56px 2px no-repeat,
        linear-gradient(#23253b, #23253b) 0 8px / 100% 2px no-repeat,
        linear-gradient(#23253b, #23253b) 0 14px / 100% 2px no-repeat;
}

.meter::-webkit-slider-thumb {
    appearance: none;
    width: 4px;
    height: 24px;
    border-radius: 2px;
    background: #9c9fb0;
}

/* ---------- layers ---------- */

.layers {
    display: grid;
    grid-template-columns: minmax(0, 588fr) minmax(0, 416fr) minmax(0, 588fr);
    gap: 8px;
    padding: 0 13px;
}

.layer {
    --accent: #a47a35;
}

.layer-b {
    --accent: #2d8991;
}

.layer-head {
    display: flex;
    align-items: center;
    height: 48px;
    padding: 0 7px 0 18px;
    border-radius: 3px 3px 0 0;
    background: linear-gradient(#34406a, #2c3455);
}

.layer-head.flat {
    height: 46px;
    margin-top: 9px;
    border-radius: 3px;
    background: #282d49;
}

.kaoss {
    background: #2c3455;
    align-self: start;
}

h2,
h3 {
    color: #a0a3b2;
    font-family: Inter, sans-serif;
    font-size: 11px;
    font-weight: 800;
    letter-spacing: 2px;
}

.layer-head h2 {
    width: 101px;
    font-size: 13px;
}

.kaoss h2 {
    width: 84px;
}

.power {
    width: 12px;
    margin-right: 8px;
    color: #7c8096;
}

.power svg,
.chord svg {
    width: 14px;
    height: 14px;
}

.power.on {
    color: var(--accent);
}

.preset {
    display: flex;
    align-items: center;
    width: 220px;
    height: 24px;
    padding-left: 8px;
    background: #272f50;
}

.preset button + button {
    margin: 0 11px 0 18px;
}

.preset.dim {
    height: 20px;
    background: #20263f;
    color: #60647c;
}

.preset.faint {
    color: #4b5272;
}

.layer-head .meter {
    margin-left: 54px;
}

.layer-head output {
    margin-left: auto;
}

.panels {
    display: grid;
    grid-template-columns: repeat(2, minmax(0, 1fr));
    gap: 4px;
    background: #161b38;
}

.panel {
    border-radius: 3px;
}

.osc {
    min-height: 197px;
    background: #394263;
}

.low {
    min-height: 144px;
    background: #222842;
}

.panel-head {
    display: flex;
    align-items: center;
    height: 48px;
    padding: 0 12px 0 18px;
}

.panel-head h3 {
    width: 75px;
    white-space: nowrap;
}

.low .panel-head {
    height: 44px;
}

.modes {
    display: flex;
    gap: 4px;
    margin-bottom: 8px;
}

.modes button {
    width: 24px;
    height: 24px;
    border: 1px solid #4b5475;
    border-radius: 3px;
    color: #4b5475;
}

.modes svg {
    width: 22px;
    height: 22px;
}

.modes .active {
    border-color: #7e86a3;
    color: #7e86a3;
}

.off .modes button {
    border-color: #414a6b;
    color: #414a6b;
}

.off .modes .active {
    border-color: #606a8c;
    color: #606a8c;
}

.vol {
    display: flex;
    align-items: flex-end;
    gap: 6px;
    margin: 0 0 6px auto;
}

.off .vol {
    opacity: 0.45;
}

.knob {
    width: 26px;
    height: 26px;
}

.knob.mid {
    width: 32px;
    height: 32px;
}

.knob.big {
    width: 50px;
    height: 50px;
}

.knob svg {
    width: 100%;
    height: 100%;
    overflow: visible;
}

.osc-body {
    display: flex;
    padding-top: 21px;
    color: #6d7490;
}

.fader-col {
    display: flex;
    flex: none;
    flex-direction: column;
    align-items: center;
    gap: 2px;
    width: 68px;
    margin-right: 6px;
    white-space: nowrap;
}

.fader-col.right {
    margin: 0 7px 0 auto;
}

.fader {
    appearance: none;
    writing-mode: vertical-lr;
    direction: rtl;
    width: 12px;
    height: 89px;
    background:
        linear-gradient(var(--accent), var(--accent)) 50% 100% / 2px var(--fill) no-repeat content-box,
        repeating-linear-gradient(var(--accent) 0 3px, transparent 3px 6px) 50% 0 / 1px 100% no-repeat content-box;
    padding: 6px 0;
}

.fader::-webkit-slider-runnable-track {
    margin: -6px 0;
}

.fader::-webkit-slider-thumb {
    appearance: none;
    width: 12px;
    height: 12px;
    border: 2px solid var(--accent);
    border-radius: 50%;
    background: #394263;
}

.modded::-webkit-slider-thumb {
    box-shadow: 0 -18px 0 -3px #5b2474;
}

.dotted::-webkit-slider-thumb {
    background: #6b1f7c;
}

.wave {
    flex: 1;
    min-width: 0;
    height: 36px;
    margin-top: 32px;
    overflow: visible;
}

.wave path {
    fill: none;
    stroke: var(--accent);
    stroke-width: 2;
}

.low-body {
    display: flex;
    justify-content: space-between;
    height: 81px;
    padding: 0 18px;
}

.low-body.faint,
.type.faint {
    opacity: 0.5;
}

.noise {
    width: 110px;
    height: 66px;
    margin-top: 13px;
    background: #8a91a8;
}

.knobs {
    display: flex;
    align-items: flex-end;
    margin-left: auto;
    padding-bottom: 2px;
}

.filter .knobs {
    padding-bottom: 6px;
}

.knob-col {
    display: flex;
    flex-direction: column;
    align-items: center;
    gap: 2px;
    width: 65px;
}

.knob-col .big {
    margin-bottom: -4px;
}

.knob-col.bright {
    color: #9a9db0;
}

.balance {
    margin-right: 32px;
}

.ring-form {
    display: grid;
    grid-template-columns: 40px 72px;
    gap: 4px 8px;
    align-content: end;
    align-items: center;
    text-align: right;
}

.select {
    position: relative;
}

.select::after {
    content: "";
    position: absolute;
    top: 50%;
    right: 9px;
    width: 5px;
    height: 5px;
    margin-top: -4px;
    border: solid #7b7f96;
    border-width: 0 1px 1px 0;
    transform: rotate(45deg);
    pointer-events: none;
}

select {
    appearance: none;
    width: 100%;
    height: 24px;
    padding: 0 8px;
    border-radius: 2px;
    background: #1e2340;
}

.type {
    display: flex;
    align-items: center;
    gap: 12px;
    margin: 4px 5px 0 auto;
}

.type .select {
    width: 98px;
}

.curve {
    width: 130px;
    height: 26px;
    margin: 47px 0 0 -6px;
}

.curve path {
    fill: none;
    stroke: #7c8299;
    stroke-width: 1.5;
}

/* ---------- keyboard row ---------- */

.keys-row {
    display: flex;
    height: 101px;
    padding: 10px 12px 0 27px;
}

.chords {
    width: 134px;
}

.chord-grid {
    display: grid;
    grid-template-columns: 57px 57px;
    gap: 8px 0;
    margin-top: 12px;
}

.chord {
    justify-content: flex-start;
    gap: 6px;
}

.wheels {
    display: flex;
    gap: 14px;
    padding-top: 4px;
}

.wheel-col {
    display: flex;
    flex-direction: column;
    align-items: center;
    gap: 6px;
    width: 24px;
}

.wheel {
    appearance: none;
    writing-mode: vertical-lr;
    direction: rtl;
    width: 24px;
    height: 51px;
    border-radius: 3px;
    background: #1d1e45;
}

.wheel::-webkit-slider-thumb {
    appearance: none;
    width: 18px;
    height: 3px;
    border: 0;
    border-radius: 2px;
    background: #8a8ca0;
}

.keyboard {
    display: flex;
    flex: 1;
    height: 69px;
    margin: 4px 17px 0 20px;
}

.key {
    position: relative;
    flex: 1;
    border-right: 1px solid #12132a;
    border-radius: 0 0 2px 2px;
    background: #82859a;
}

.key.lit {
    background: #989bad;
}

.key b {
    position: absolute;
    z-index: 1;
    top: 0;
    right: -9px;
    width: 18px;
    height: 39px;
    border-radius: 0 0 2px 2px;
    background: #0b1023;
}

.key b.low-side {
    right: -7px;
}

.key b.high-side {
    right: -12px;
}

.key b.lit {
    background: #2f3142;
}

.scale {
    width: 280px;
}

.scale-head {
    display: flex;
    margin-bottom: 11px;
}

.scale-row {
    display: flex;
    gap: 6px;
    height: 21px;
    margin-bottom: 4px;
    line-height: 21px;
}

.scale-num {
    width: 19px;
    background: #17183a;
    color: #4c4f6b;
    text-align: center;
}

.scale-preset {
    display: flex;
    flex: 1;
    align-items: center;
    padding-left: 7px;
    border-radius: 2px;
    background: #1d1e45;
}

.scale-preset button + button {
    margin: 0 12px 0 17px;
}

.scale-preset.bright button {
    color: #b9bbca;
}

.scale-row .select {
    width: 48px;
}

.scale-row select {
    height: 21px;
    background: #1d1e45;
}

.status {
    display: flex;
    align-items: center;
    height: 24px;
    padding: 0 22px 0 11px;
    background: #0d0e22;
}

.status p {
    flex: 1;
    color: #80839a;
}

.status button + button {
    margin-left: 18px;
}

/* ---------- shaper browser ---------- */

.shaper {
    position: absolute;
    top: 99px;
    left: 50%;
    width: 832px;
    height: 780px;
    margin-left: -416px;
    padding: 32px 33px 0 31px;
    border: 1px solid #11183a;
    background: #4e5c90;
    color: #b6bfe0;
    z-index: 5;
}

.shaper-head {
    display: flex;
    align-items: center;
    justify-content: space-between;
}

.shaper-head h2 {
    color: #dbe0f2;
}

.shaper-head button {
    color: #dbe0f2;
}

.shaper-body {
    display: flex;
    margin-top: 35px;
}

.shaper-grid {
    display: grid;
    flex: 1;
    grid-template-columns: repeat(5, 1fr);
    grid-auto-rows: 121px;
    margin-left: -25px;
    margin-right: -13px;
}

.shape {
    flex-direction: column;
    justify-content: flex-start;
    gap: 12px;
    padding-top: 7px;
}

.shape svg {
    overflow: visible;
}

.shape path {
    fill: none;
    stroke: #b6bfe0;
    stroke-width: 1.2;
}

.shape.selected {
    color: #f1f3fb;
}

.shape.selected path {
    stroke: #f1f3fb;
}

.scrollbar {
    width: 4px;
    height: 201px;
    border-radius: 2px;
    background: #6d7bb0;
}
```
FILE: script.js
```js
// Chebyshev polynomial on [-1, 1]
function cheb(n, x) {
    return Math.cos(n * Math.acos(x));
}

function additive(n) {
    return x => (x + cheb(n, x)) / 2;
}

function tanh(k) {
    return x => Math.tanh(k * x) / Math.tanh(k);
}

// eased interpolation between [x, y] turning points
function through(points) {
    return x => {
        let i = 1;
        while (i < points.length - 1 && x > points[i][0]) i++;
        const [x0, y0] = points[i - 1];
        const [x1, y1] = points[i];
        const t = (x - x0) / (x1 - x0);
        let e = (1 - Math.cos(Math.PI * t)) / 2;
        if (i === 1) e = Math.sin(Math.PI * t / 2);
        if (i === points.length - 1) e = 1 - Math.cos(Math.PI * t / 2);
        return y0 + (y1 - y0) * e;
    };
}

const shapes = [
    ['Triangle', x => x],
    ['Square', x => -Math.sin(Math.PI / 2 * Math.max(-1, Math.min(1, x * 1.3)))],
    ['Sine', x => Math.sin(Math.PI * x)],
    ['Sine 2', x => Math.sin(2 * Math.PI * x)],
    ['Sine4', x => Math.sin(4 * Math.PI * x)],
    ['Pickup1', x => 1 - 2 / (1 + Math.pow(x / 0.2, 2))],
    ['Pickup2', x => 1 - 2 / (1 + Math.pow(Math.abs(x / 0.25), 3))],
    ['Tanh2', tanh(2)],
    ['Tanh4', tanh(4)],
    ['Tanh8', tanh(8)],
    ['Additive Saw3', through([[-1, -0.6], [-0.55, -0.43], [0.1, -0.47], [1, 0.55]])],
    ['Additive Sqr3', through([[-1, -0.9], [-0.85, -0.67], [-0.5, -1], [0.5, 1], [0.87, 0.75], [1, 0.95]])],
    ['Additive Tri3', x => 0.65 * x + 0.35 * Math.pow(x, 7)],
    ['Additive 12345', through([[-1, -0.58], [-0.82, -0.38], [-0.45, -0.62], [0.15, -0.32], [0.68, -0.75], [1, 0.58]])],
    ['Additive 1+2', x => (x + cheb(2, x)) / 2 - 0.25],
    ['Additive 1+3', additive(3)],
    ['Additive 1+4', additive(4)],
    ['Additive 1+5', additive(5)],
    ['Additive 1+6', additive(6)],
    ['Additive 1+7', additive(7)],
    ['Additive 1+8', additive(8)],
    ['SineOctave', x => cheb(2, x)],
    ['Sine2Octave', x => cheb(4, x)],
    ['MultiTri', x => 0.85 * Math.tanh(1.2 * Math.sin(4 * Math.PI * x))],
    ['Digi 1', x => x * Math.abs(x)],
    ['Digi 2', x => -0.53 + Math.max(0, x)],
    ['Digi 3', x => -0.53 + Math.pow(Math.max(0, x), 1.7)],
    ['Digi 4', x => -0.53 + Math.sin(Math.PI * Math.pow(Math.max(0, x), 1.5))],
    ['Digi 5', x => -0.53 + Math.pow(Math.max(0, Math.sin(Math.PI * Math.pow(Math.max(0, x), 1.3))), 1.4)],
    ['Tube', x => Math.sin(Math.PI * x / 2)]
];

const grid = document.getElementById('shapes');

shapes.forEach(([name, fn]) => {
    let d = '';
    for (let i = 0; i <= 160; i++) {
        const x = i / 80 - 1;
        d += `${i ? 'L' : 'M'}${(20 + 20 * x).toFixed(2)} ${(20 - 20 * fn(x)).toFixed(2)}`;
    }
    const button = document.createElement('button');
    button.className = name === 'Sine4' ? 'shape selected' : 'shape';
    button.innerHTML = `<svg width="40" height="40" viewBox="0 0 40 40"><path d="${d}"/></svg><span>${name}</span>`;
    grid.appendChild(button);
});

// Knobs: 0deg points up, travel is -135..135
function polar(c, r, deg) {
    const a = (deg - 90) * Math.PI / 180;
    return `${(c + r * Math.cos(a)).toFixed(1)} ${(c + r * Math.sin(a)).toFixed(1)}`;
}

document.querySelectorAll('.knob').forEach(el => {
    const angle = Number(el.dataset.angle);
    const big = el.classList.contains('big');
    const mid = el.classList.contains('mid');
    const size = big ? 50 : mid ? 32 : 26;
    const c = size / 2;
    const body = big ? 16 : mid ? 10 : 8;
    const ring = big ? 23 : mid ? 14 : 12;
    let svg = `<svg viewBox="0 0 ${size} ${size}"><circle cx="${c}" cy="${c}" r="${body}" fill="${big ? '#979aa4' : '#5c658b'}"/>`;
    if (angle > -135) {
        svg += `<path d="M${polar(c, ring, -135)}A${ring} ${ring} 0 ${angle > 45 ? 1 : 0} 1 ${polar(c, ring, angle)}" fill="none" stroke="var(--accent)" stroke-width="1.3"/>`;
    }
    svg += `<path d="M${polar(c, 2, angle)}L${polar(c, body - 1, angle)}" stroke="#10131f" stroke-width="2"/>`;
    if (el.dataset.mod) {
        const [x, y] = polar(c, ring, Number(el.dataset.mod)).split(' ');
        svg += `<circle cx="${x}" cy="${y}" r="2" fill="#7a1a8c"/>`;
    }
    el.innerHTML = svg + '</svg>';
});

// Noise display
const tones = ['#a3a8b8', '#222842', '#9298ab', '#9da2b4', '#5b6280', '#a9adbb', '#858ba1', '#9da2b4'];
let seed = 7;
let bars = '';
for (let x = 0; x < 110;) {
    seed = (seed * 16807) % 2147483647;
    const w = 1 + seed % 3;
    bars += `<rect x="${x}" width="${w}" height="66" fill="${tones[(seed >> 4) % 8]}"/>`;
    x += w;
}
document.getElementById('noise').innerHTML = bars;

// Eight octaves from C, plus the top C
const keyboard = document.getElementById('keyboard');
const sides = ['low-side', 'high-side', '', 'low-side', 'mid-side', 'high-side', ''];
for (let i = 0; i < 57; i++) {
    const key = document.createElement('div');
    key.className = i === 25 || i === 29 ? 'key lit' : 'key';
    const side = sides[i % 7];
    if (side && i < 56) {
        key.innerHTML = `<b class="${side}${i === 26 ? ' lit' : ''}"></b>`;
    }
    keyboard.appendChild(key);
}
```
